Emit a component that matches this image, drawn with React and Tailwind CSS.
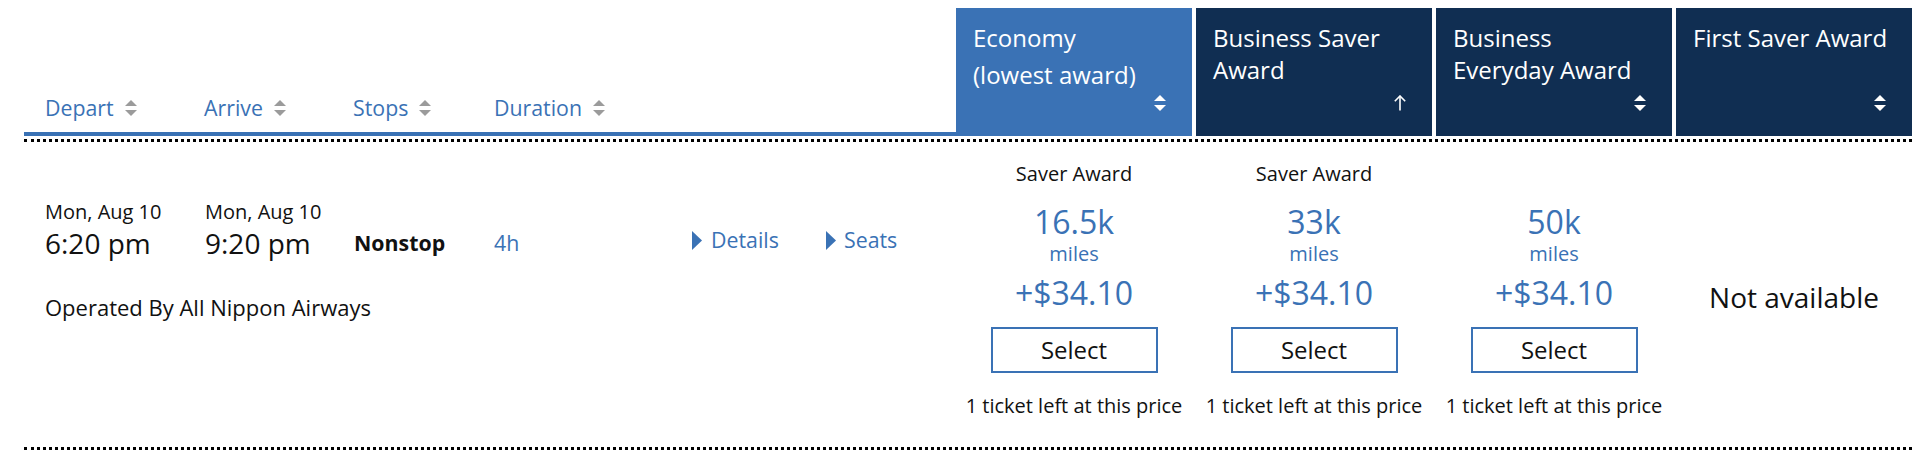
import React from "react";

function SortIcon({ className }) {
  return (
    <svg width="12" height="16" viewBox="0 0 12 16" className={className} fill="currentColor">
      <path d="M6 0L12 6H0Z" />
      <path d="M0 10H12L6 16Z" />
    </svg>
  );
}

function UpArrow({ className }) {
  return (
    <svg width="12" height="16" viewBox="0 0 12 16" className={className} fill="none" stroke="currentColor" strokeWidth="1.6">
      <path d="M6 15.5V1.2" />
      <path d="M0.8 6.2L6 1L11.2 6.2" />
    </svg>
  );
}

function Caret() {
  return (
    <svg width="10" height="19" viewBox="0 0 10 19" className="text-[#3a72b5] shrink-0">
      <path d="M0 0L10 9.5L0 19Z" fill="currentColor" />
    </svg>
  );
}

function HeaderCol({ label, width }) {
  return (
    <div className={`flex items-center ${width}`}>
      <span>{label}</span>
      <SortIcon className="ml-[11px] text-[#9b9b9b]" />
    </div>
  );
}

function AwardHeader({ lines, dark, arrow, secondGap }) {
  return (
    <div
      className={`w-[236px] h-[128px] flex flex-col pl-[17px] pt-[14px] pb-[25px] text-white text-[24px] leading-[32px] whitespace-nowrap ${
        dark ? "bg-[#102e52]" : "bg-[#3a72b5]"
      }`}
    >
      <div>
        {lines.map((l, i) => (
          <div key={i} className={i > 0 && secondGap ? "mt-[5px]" : ""}>
            {l}
          </div>
        ))}
      </div>
      <div className="mt-auto self-end mr-[26px]">
        {arrow ? <UpArrow className="text-white" /> : <SortIcon className="text-white" />}
      </div>
    </div>
  );
}

function AwardCell({ label, miles }) {
  return (
    <div className="w-[236px] flex flex-col items-center pt-[20px]">
      <div className="h-[24px] text-[20px] leading-[24px] text-[#111]">{label}</div>
      <div className="mt-[16px] text-[32px] leading-[40px] text-[#3a72b5]">{miles}</div>
      <div className="text-[20px] leading-[24px] text-[#3a72b5]">miles</div>
      <div className="mt-[7px] text-[32px] leading-[40px] text-[#3a72b5]">+$34.10</div>
      <div className="mt-[14px] w-[167px] h-[46px] border-2 border-[#3a72b5] flex items-center justify-center text-[24px] leading-[32px] text-[#111]">
        Select
      </div>
      <div className="mt-[21px] text-[20px] leading-[24px] text-[#111] whitespace-nowrap">
        1 ticket left at this price
      </div>
    </div>
  );
}

export default function App() {
  return (
    <div className="w-[1924px] h-[460px] bg-white font-['Open_Sans',sans-serif] pl-[24px] pt-[8px]">
      {/* Header */}
      <div className="flex">
        <div className="w-[932px] h-[128px] border-b-4 border-[#3a72b5] flex items-end pb-[10px] pl-[21px] text-[21.33px] leading-[28px] text-[#3a72b5]">
          <HeaderCol label="Depart" width="w-[159px]" />
          <HeaderCol label="Arrive" width="w-[149px]" />
          <HeaderCol label="Stops" width="w-[141px]" />
          <HeaderCol label="Duration" width="w-[200px]" />
        </div>
        <div className="flex gap-[4px]">
          <AwardHeader lines={["Economy", "(lowest award)"]} secondGap />
          <AwardHeader lines={["Business Saver", "Award"]} dark arrow />
          <AwardHeader lines={["Business", "Everyday Award"]} dark />
          <AwardHeader lines={["First Saver Award"]} dark />
        </div>
      </div>

      <div className="mt-[3px] w-[1888px] border-t-[3px] border-dotted border-black" />

      {/* Row */}
      <div className="flex h-[305px]">
        <div className="w-[932px] pl-[21px] pt-[58px]">
          <div className="flex items-start">
            <div className="w-[160px]">
              <div className="text-[20px] leading-[24px] text-[#111]">Mon, Aug 10</div>
              <div className="mt-[3px] text-[28px] leading-[32px] text-[#111]">6:20 pm</div>
            </div>
            <div className="w-[149px]">
              <div className="text-[20px] leading-[24px] text-[#111]">Mon, Aug 10</div>
              <div className="mt-[3px] text-[28px] leading-[32px] text-[#111]">9:20 pm</div>
            </div>
            <div className="w-[140px] mt-[29px] text-[21.33px] leading-[28px] font-bold text-[#111]">
              Nonstop
            </div>
            <div className="w-[198px] mt-[29px] text-[21.33px] leading-[28px] text-[#3a72b5]">4h</div>
            <div className="w-[134px] mt-[26px] flex items-center text-[21.33px] leading-[28px] text-[#3a72b5]">
              <Caret />
              <span className="ml-[9px]">Details</span>
            </div>
            <div className="mt-[26px] flex items-center text-[21.33px] leading-[28px] text-[#3a72b5]">
              <Caret />
              <span className="ml-[8px]">Seats</span>
            </div>
          </div>
          <div className="mt-[34px] text-[22px] leading-[28px] text-[#111]">
            Operated By All Nippon Airways
          </div>
        </div>
        <div className="flex gap-[4px]">
          <AwardCell label="Saver Award" miles="16.5k" />
          <AwardCell label="Saver Award" miles="33k" />
          <AwardCell label="" miles="50k" />
          <div className="w-[236px] pt-[137px] text-center text-[28px] leading-[36px] text-[#111]">
            Not available
          </div>
        </div>
      </div>

      <div className="w-[1888px] border-t-[3px] border-dotted border-black" />
    </div>
  );
}
